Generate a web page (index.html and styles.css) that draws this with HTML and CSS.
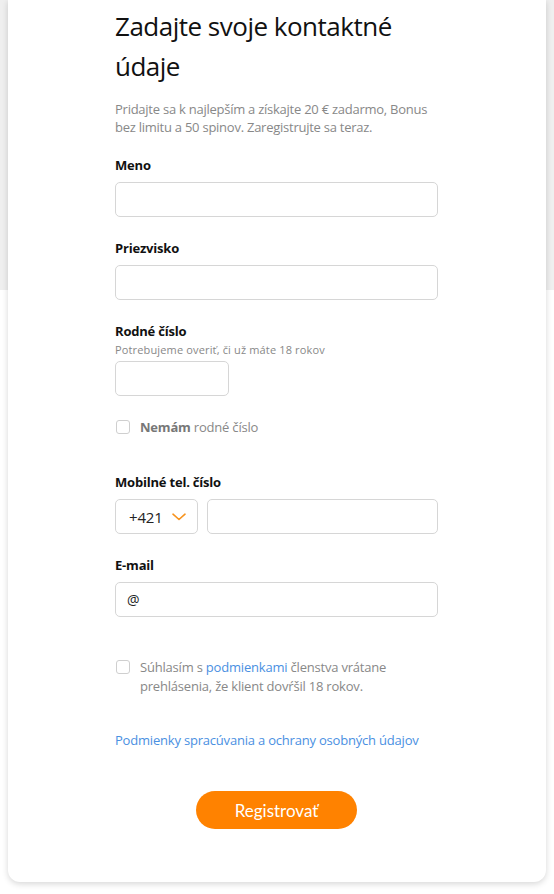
FILE: index.html
```html
<!DOCTYPE html>
<html lang="sk">
<head>
<meta charset="utf-8">
<title>Registrácia</title>
<link rel="stylesheet" href="styles.css">
</head>
<body>
<main class="card">
  <form class="form">
    <h1 class="title">Zadajte svoje kontaktné údaje</h1>
    <p class="intro">Pridajte sa k najlepším a získajte 20 € zadarmo, Bonus bez limitu a 50 spinov. Zaregistrujte sa teraz.</p>

    <div class="field">
      <label class="label">Meno</label>
      <div class="input"></div>
    </div>

    <div class="field">
      <label class="label">Priezvisko</label>
      <div class="input"></div>
    </div>

    <div class="field field-rc">
      <label class="label">Rodné číslo</label>
      <span class="hint">Potrebujeme overiť, či už máte 18 rokov</span>
      <div class="input input-short"></div>
    </div>

    <div class="check check-rc">
      <span class="box"></span>
      <span class="check-text"><b>Nemám</b> rodné číslo</span>
    </div>

    <div class="field field-phone">
      <label class="label">Mobilné tel. číslo</label>
      <div class="phone-row">
        <div class="input select">
          <span>+421</span>
          <svg class="chev" width="14" height="8" viewBox="0 0 14 8"><path d="M1 1.2 L7 6.5 L13 1.2" fill="none" stroke="#f7931e" stroke-width="1.6" stroke-linecap="round" stroke-linejoin="round"/></svg>
        </div>
        <div class="input phone"></div>
      </div>
    </div>

    <div class="field">
      <label class="label">E-mail</label>
      <div class="input email">@</div>
    </div>

    <div class="check check-terms">
      <span class="box"></span>
      <span class="check-text">Súhlasím s <a class="link" href="#">podmienkami</a> členstva vrátane prehlásenia, že klient dovŕšil 18 rokov.</span>
    </div>

    <a class="link privacy" href="#">Podmienky spracúvania a ochrany osobných údajov</a>

    <div class="actions">
      <button type="button" class="btn">Registrovať</button>
    </div>
  </form>
</main>
</body>
</html>
```

FILE: styles.css
```css
html, body {
  height: 100%;
}
body {
  margin: 0;
  padding: 0 8px;
  background: linear-gradient(#efefef 0, #efefef 290px, #ffffff 290px);
  font-family: "Open Sans", "Liberation Sans", sans-serif;
  color: #111;
  letter-spacing: -0.2px;
}
.card {
  background: #fff;
  border-radius: 0 0 12px 12px;
  box-shadow: 0 2px 6px rgba(0, 0, 0, 0.16);
  height: 882px;
  box-sizing: border-box;
  display: flex;
  justify-content: flex-start;
  padding-left: 107px;
}
.form {
  width: 323px;
  display: flex;
  flex-direction: column;
  padding-top: 6px;
}
.title {
  margin: 0;
  font-size: 26px;
  line-height: 40px;
  font-weight: 400;
  letter-spacing: -0.5px;
  color: #111;
}
.intro {
  margin: 14px 0 0;
  font-size: 13px;
  line-height: 18px;
  color: #888;
  letter-spacing: -0.25px;
}
.field {
  display: flex;
  flex-direction: column;
  margin-top: 20px;
}
.field + .field {
  margin-top: 22px;
}
.label {
  font-size: 13px;
  line-height: 18px;
  font-weight: 700;
  color: #111;
  margin-bottom: 8px;
}
.field-rc .label {
  margin-bottom: 2px;
}
.hint {
  font-size: 11px;
  line-height: 15px;
  color: #888;
  letter-spacing: 0.15px;
  margin-bottom: 4px;
}
.input {
  height: 35px;
  box-sizing: border-box;
  border: 1px solid #d6d6d6;
  border-radius: 5px;
  background: #fff;
}
.input-short {
  width: 114px;
}
.check {
  display: flex;
  align-items: flex-start;
  gap: 10px;
  font-size: 13px;
  color: #888;
}
.box {
  flex: none;
  width: 14px;
  height: 14px;
  box-sizing: border-box;
  border: 1px solid #cfcfcf;
  border-radius: 3px;
  margin: 2px 0 0 1px;
  background: #fff;
}
.check-text b {
  color: #777;
  font-weight: 700;
}
.check-rc {
  margin-top: 22px;
  line-height: 18px;
}
.field-phone {
  margin-top: 37px;
}
.phone-row {
  display: flex;
  gap: 9px;
}
.select {
  width: 83px;
  flex: none;
  display: flex;
  align-items: center;
  padding-left: 13px;
  gap: 9px;
  font-size: 15px;
  color: #222;
}
.chev {
  margin-top: 1px;
}
.phone {
  flex: 1;
}
.email {
  display: flex;
  align-items: center;
  padding-left: 11px;
  font-size: 14px;
  color: #222;
}
.check-terms {
  margin-top: 41px;
  line-height: 19px;
}
.check-terms .box {
  margin-top: 2px;
}
.link {
  color: #4a90e2;
  text-decoration: none;
}
.privacy {
  margin-top: 35px;
  font-size: 13px;
  line-height: 18px;
}
.actions {
  display: flex;
  justify-content: center;
  margin-top: 42px;
}
.btn {
  width: 161px;
  height: 38px;
  border: 0;
  border-radius: 19px;
  background: #ff8200;
  color: #fff;
  font-family: Lato, "Open Sans", sans-serif;
  font-size: 17px;
  letter-spacing: 0;
  padding: 0;
}
```
